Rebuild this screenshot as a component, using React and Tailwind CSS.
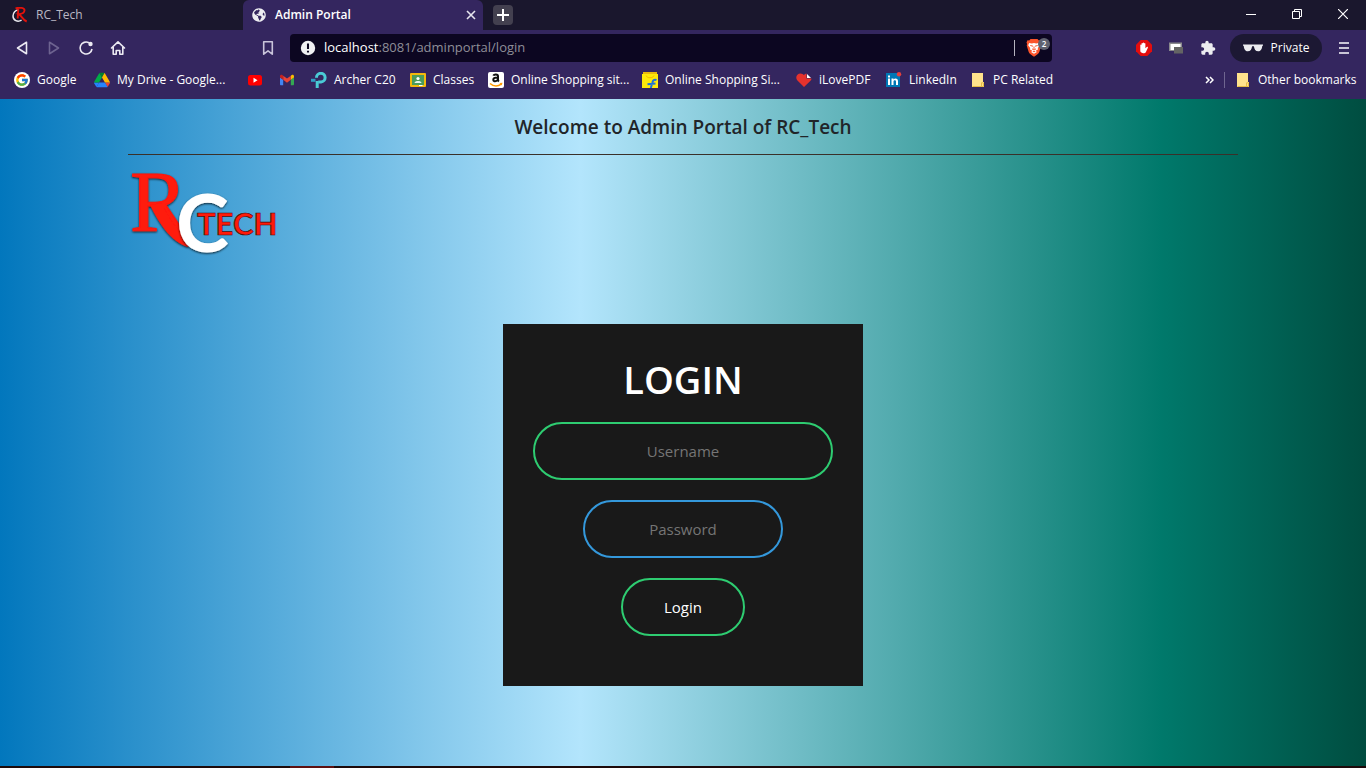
import React from "react";
import { FcGoogle } from "react-icons/fc";
import { FaGlobeAmericas } from "react-icons/fa";
import { MdExtension } from "react-icons/md";

function TabLogo() {
  return (
    <svg viewBox="0 0 16 16" className="size-4 shrink-0" aria-hidden="true">
      <path d="M6.500 3C3.500 3 1 5.500 1 9c0 4.500 4.600 6.600 8.600 4.200" fill="none" stroke="#e8e8ee" strokeWidth="1.500" />
      <path d="M3.500 1.300c4-1 9.300-.8 9 2.200-.2 2.300-3 3.500-5.800 3.700 3 1.500 4 5.800 8 7.300M6.300 1.500l-.6 10" fill="none" stroke="#e3120b" strokeWidth="1.900" />
    </svg>
  );
}

function DriveIcon() {
  return (
    <svg viewBox="0 0 87.3 78" className="size-4" aria-hidden="true">
      <path fill="#2684fc" d="m6.6 66.850 3.850 6.650c.8 1.400 1.950 2.500 3.300 3.300l13.750-23.800h-27.500c0 1.550.4 3.100 1.200 4.500z" />
      <path fill="#00ac47" d="m43.650 25-13.750-23.800c-1.350.8-2.500 1.900-3.300 3.300l-25.400 44a9.060 9.060 0 0 0 -1.200 4.500h27.500z" />
      <path fill="#ea4335" d="m73.550 76.800c1.350-.8 2.500-1.900 3.300-3.300l1.600-2.750 7.650-13.250c.8-1.400 1.200-2.950 1.200-4.500h-27.502l5.852 11.500z" />
      <path fill="#00832d" d="m43.650 25 13.750-23.800c-1.350-.8-2.900-1.200-4.500-1.200h-18.500c-1.600 0-3.150.45-4.500 1.200z" />
      <path fill="#2684fc" d="m59.800 53h-32.300l-13.750 23.800c1.350.8 2.900 1.200 4.500 1.200h50.800c1.600 0 3.150-.45 4.500-1.200z" />
      <path fill="#ffba00" d="m73.400 26.500-12.700-22c-.8-1.400-1.950-2.500-3.300-3.300l-13.750 23.800 16.150 28h27.450c0-1.550-.4-3.100-1.200-4.500z" />
    </svg>
  );
}

function GoogleIcon() {
  return (
    <span className="grid size-4 place-items-center rounded-full bg-white">
      <FcGoogle className="size-3.5" />
    </span>
  );
}

function YoutubeIcon() {
  return (
    <svg viewBox="0 0 16 16" className="size-4" aria-hidden="true">
      <rect x="1" y="3" width="14" height="10.500" rx="2.500" fill="#f00" />
      <path d="M6.500 5.800v5l4-2.500z" fill="#fff" />
    </svg>
  );
}

function GmailIcon() {
  return (
    <svg viewBox="52 42 88 66" className="size-4 p-px" aria-hidden="true">
      <path fill="#4285f4" d="M58 108h14V74L52 59v43c0 3.320 2.690 6 6 6" />
      <path fill="#34a853" d="M120 108h14c3.320 0 6-2.690 6-6V59l-20 15" />
      <path fill="#fbbc04" d="M120 48v26l20-15v-8c0-7.420-8.470-11.650-14.400-7.200" />
      <path fill="#ea4335" d="M72 74V48l24 18 24-18v26L96 92" />
      <path fill="#c5221f" d="M52 51v8l20 15V48l-5.600-4.200c-5.940-4.450-14.400-.22-14.400 7.200" />
    </svg>
  );
}

function RouterIcon() {
  return (
    <svg viewBox="0 0 16 16" className="size-4" fill="none" strokeWidth="3" aria-hidden="true">
      <path d="M0 8.300h4.500" stroke="#2f9fc4" />
      <path d="M5.500 5.800A4.300 4.300 0 1 1 10 9.900H7.200" stroke="#4acbd6" />
      <path d="M6.200 9v7" stroke="#4acbd6" />
    </svg>
  );
}

function ClassroomIcon() {
  return (
    <svg viewBox="0 0 16 16" className="size-4" aria-hidden="true">
      <rect y="1" width="16" height="14" rx="1" fill="#f2b90c" />
      <rect x="2" y="3" width="12" height="10" fill="#4a9c5b" />
      <circle cx="8" cy="6.500" r="1.600" fill="#fff" />
      <path d="M4.500 11c.3-2.600 6.700-2.600 7 0z" fill="#e3f3e9" />
      <path d="M9 13h3.500v1H9z" fill="#fff" />
    </svg>
  );
}

function AmazonIcon() {
  return (
    <svg viewBox="0 0 16 16" className="size-4" aria-hidden="true">
      <rect width="16" height="16" rx="2" fill="#fff" />
      <path d="M5.300 3.700C6 2.200 10 2 10 4.300v3.500c0 .8.300 1.200.9 1.700M9.700 5.500C7 5.500 5.300 6.100 5.300 7.800c0 2.200 3.600 2 4.500-.3" fill="none" stroke="#111" strokeWidth="2" />
      <path d="M2 11.500c3.500 3 8 3 11.300.6" fill="none" stroke="#ff9900" strokeWidth="1.500" />
      <path d="m11.500 11 3-.3-.8 2.800z" fill="#ff9900" />
    </svg>
  );
}

function FlipkartIcon() {
  return (
    <svg viewBox="0 0 16 16" className="size-4" aria-hidden="true">
      <path d="M1 0h14v3H1z" fill="#e8b90d" />
      <path d="M0 2h16v14H0z" fill="#fde90a" />
      <path d="M4 3.500c1 3 7 3 8 0" fill="none" stroke="#f5b800" />
      <path d="M14.500 8c-2.500-.8-3.500.2-4 2.200L8.800 16M5.500 12.300l8-.8" fill="none" stroke="#1c72d8" strokeWidth="2" />
    </svg>
  );
}

function HeartIcon() {
  return (
    <svg viewBox="0 0 16 16" className="size-4" aria-hidden="true">
      <path d="M8 15 1.200 8.300C-1 5 1 1.500 4.500 1.500 6 1.500 7.300 2.300 8 3.300 8.500 2.300 9.500 1.500 10.500 1.500V6.500h5c0 1-.5 1.700-1 2.200z" fill="#e5322d" />
      <path d="M11 2 15 6h-4z" fill="#fff" />
    </svg>
  );
}

function LinkedinIcon() {
  return (
    <svg viewBox="0 0 16 16" className="size-4" aria-hidden="true">
      <rect y="1" width="14" height="14" fill="#0077b5" />
      <path d="M2 6.500h2V13H2zM2 3.500h2v2H2zM5.500 6.500h2v1c1-1.700 4.500-1.500 4.500 1.500v4h-2V9.500c0-1.800-2.500-1.600-2.500 0V13h-2z" fill="#fff" />
      <circle cx="13" cy="2.300" r="2.200" fill="#e6403c" />
    </svg>
  );
}

function FolderIcon() {
  return (
    <svg viewBox="0 0 16 16" className="size-4" aria-hidden="true">
      <path d="M2 1h11v9h1v5H2z" fill="#ffe38c" />
      <path d="M11.500 14.500v-3.700h2v3.700H2.500" fill="none" stroke="#e6bc45" />
    </svg>
  );
}

const bookmarks = [
  { label: "Google", icon: GoogleIcon, size: "w-16" },
  { label: "My Drive - Google...", icon: DriveIcon, size: "w-[137px]" },
  { name: "YouTube", icon: YoutubeIcon, size: "w-4" },
  { name: "Gmail", icon: GmailIcon, size: "w-4" },
  { label: "Archer C20", icon: RouterIcon, size: "w-[83px]" },
  { label: "Classes", icon: ClassroomIcon, size: "w-[62px]" },
  { label: "Online Shopping sit...", icon: AmazonIcon, size: "w-[138px]" },
  { label: "Online Shopping Si...", icon: FlipkartIcon, size: "w-[138px]" },
  { label: "iLovePDF", icon: HeartIcon, size: "w-[74px]" },
  { label: "LinkedIn", icon: LinkedinIcon, size: "w-[68px]" },
  { label: "PC Related", icon: FolderIcon, size: "w-[84px]" },
];

function Bookmark({ label, name, icon: Icon, size }) {
  return (
    <a href="#" aria-label={name} className={"flex shrink-0 items-center gap-[7px] whitespace-nowrap " + size}>
      <span className="shrink-0"><Icon /></span>
      {label}
    </a>
  );
}

function TabStrip() {
  return (
    <div className="flex h-[30px] bg-[#1a172d]">
      <div className="flex w-[243px] items-center gap-2 pl-3 text-[#b9b7c4]">
        <TabLogo />
        <span>RC_Tech</span>
      </div>
      <div className="flex w-60 items-center gap-2 rounded-t-md bg-[#34265f] pr-[7px] pl-2 font-semibold text-white">
        <FaGlobeAmericas className="size-4 p-px text-[#ededf2]" />
        <span className="flex-1">Admin Portal</span>
        <button aria-label="Close tab">
          <svg viewBox="0 0 10 10" className="size-2.5" fill="none" stroke="#e6e4ee" strokeWidth="1.600"><path d="m1 1 8 8M9 1 1 9" /></svg>
        </button>
      </div>
      <button aria-label="New tab" className="mt-[5px] ml-2.5 grid size-5 place-items-center rounded-sm bg-[#43404f]">
        <svg viewBox="0 0 12 12" className="size-3" stroke="#fff" strokeWidth="2"><path d="M6 0v12M0 6h12" /></svg>
      </button>
      <div className="ml-auto flex items-center gap-9 pr-[18px] pb-0.5">
        <button aria-label="Minimize">
          <svg viewBox="0 0 10 10" className="size-2.5" stroke="#fff"><path d="M0 5.500h10" /></svg>
        </button>
        <button aria-label="Restore">
          <svg viewBox="0 0 10 10" className="size-2.5" fill="none" stroke="#fff"><path d="M.5 2.500h7v7h-7zM2.500 2.500v-2h7v7h-2" /></svg>
        </button>
        <button aria-label="Close window">
          <svg viewBox="0 0 10 10" className="size-2.5" stroke="#fff" strokeWidth="1.200"><path d="m0 0 10 10M10 0 0 10" /></svg>
        </button>
      </div>
    </div>
  );
}

function Toolbar() {
  return (
    <div className="flex h-9 items-center">
      <div className="flex items-center gap-4 pl-3.5">
        <button aria-label="Back">
          <svg viewBox="0 0 16 16" className="size-4" fill="none" stroke="#ebe9f2" strokeWidth="1.600" strokeLinejoin="round"><path d="M12.500 2.300v11.400L3.500 8z" /></svg>
        </button>
        <button aria-label="Forward">
          <svg viewBox="0 0 16 16" className="size-4" fill="none" stroke="#6d6390" strokeWidth="1.600" strokeLinejoin="round"><path d="M3.500 2.300v11.400l9-5.700z" /></svg>
        </button>
        <button aria-label="Reload">
          <svg viewBox="0 0 16 16" className="size-4" fill="none" stroke="#ebe9f2" strokeWidth="1.600"><path d="M11 2.800A6 6 0 1 0 14 9" /><circle cx="12.500" cy="4" r="2.200" fill="#ebe9f2" stroke="none" /></svg>
        </button>
        <button aria-label="Home">
          <svg viewBox="0 0 16 16" className="size-4" fill="none" stroke="#ebe9f2" strokeWidth="1.600" strokeLinejoin="round" strokeLinecap="round"><path d="m1.500 8 6.500-6.200L14.500 8M3.200 7v7.200h3V10.500h3.600v3.700h3V7" /></svg>
        </button>
      </div>
      <button aria-label="Bookmark this page" className="ml-[134px]">
        <svg viewBox="0 0 16 16" className="size-4" fill="none" stroke="#c9c4da" strokeWidth="1.600" strokeLinejoin="round"><path d="M3.700 1.700h8.600v12.500L8 10.800l-4.300 3.400z" /></svg>
      </button>
      <div className="ml-3.5 flex h-7 max-w-[762px] min-w-0 flex-1 items-center rounded-sm bg-[#0c0621] pr-0.5 pl-2.5">
        <svg viewBox="0 0 14 14" className="size-4 shrink-0" aria-hidden="true"><circle cx="7" cy="7" r="6.300" fill="#f0f0f3" /><path d="M7 3v4.800M7 9.300v1.700" stroke="#0c0621" strokeWidth="1.800" /></svg>
        <a href="#" className="ml-2 flex-1 text-[13px] text-[#8f8e98]"><span className="text-white">localhost</span>:8081/adminportal/login</a>
        <span className="mr-[11px] h-4 w-px bg-[#b5b3bf]" />
        <button aria-label="Shields" className="relative h-5 w-6">
          <svg viewBox="0 0 16 20" className="h-5 w-4">
            <path d="M4.500 1h7l1.300 1.400 1.700-.1 1 2.200-.6 1.500.4 1.500-2 6.500c-.3 1-1 1.700-1.800 2.300L8.500 18.600h-1l-3-2.300c-.8-.6-1.500-1.300-1.800-2.300l-2-6.500.4-1.500L.5 4.500l1-2.200 1.700.1z" fill="#fb542b" />
            <path d="m3.200 5 2.600.4L8 5l2.200.4 2.600-.4 1 2.200-2 2.800.2 1.500-2 1 .6 1.700L8 15.800l-2.600-1.600.6-1.700-2-1L4.200 10l-2-2.800z" fill="#fff" />
            <path d="M4.300 7.500 7 8.200M11.700 7.500 9 8.200M8 8.500V11M6 10.800l2 1.200 2-1.200M6.800 13.600h2.400" stroke="#fb542b" fill="none" />
          </svg>
          <span className="absolute top-0 right-0 grid size-3 place-items-center rounded-full bg-[#5f6270] text-[8px] leading-3 font-semibold text-white">2</span>
        </button>
      </div>
      <div className="ml-auto flex items-center gap-4 pl-4">
        <button aria-label="Ad blocker">
          <svg viewBox="0 0 16 16" className="size-4"><path d="M4.700 0h6.600L16 4.700v6.600L11.300 16H4.700L0 11.300V4.700z" fill="#e40d0d" /><path d="M4.300 8.500V5.200c0-.8 1.200-.8 1.200 0V3.700c0-.8 1.300-.8 1.300 0V3c0-.8 1.300-.8 1.300 0v.7c0-.8 1.300-.8 1.300 0v4.500l1.400-1.300c.8-.4 1.400.3 1 1L9.800 12.200c-.9 1.500-5.300 1.300-5.500-1.200z" fill="#fff" /></svg>
        </button>
        <button aria-label="Windows extension">
          <svg viewBox="0 0 16 16" className="size-4"><path d="M1 2.500h13V11H1z" fill="#8a8a8d" /><path d="M2.500 4h10v6h-10z" fill="#fff" /><path d="M6 7h9v6.500H6z" fill="#646464" /></svg>
        </button>
        <button aria-label="Extensions"><MdExtension className="size-4 text-[#ececf0]" /></button>
        <button className="-ml-0.5 flex h-7 w-[92px] items-center justify-center gap-2 rounded-full bg-[#1c1833] text-white">
          <svg viewBox="0 0 20 8" className="h-2 w-5" aria-hidden="true"><path d="M0 .5h20v1.300h-.7C18.800 6 17.500 7.300 15.300 7.300c-2.800 0-4-2-4.400-5H9.100c-.4 3-1.600 5-4.400 5C2.500 7.300 1.200 6 .7 1.800H0z" fill="#ececf0" /></svg>
          Private
        </button>
        <button aria-label="Menu" className="mr-4">
          <svg viewBox="0 0 12 12" className="size-3" stroke="#c9c5d6" strokeWidth="2"><path d="M1 1h10M1 6h10M1 11h10" /></svg>
        </button>
      </div>
    </div>
  );
}

function BookmarksBar() {
  return (
    <nav aria-label="Bookmarks" className="flex h-[33px] items-center gap-4 px-3.5 pb-[5px] text-white">
      {bookmarks.map((b) => <Bookmark key={b.name || b.label} {...b} />)}
      <div className="ml-auto flex items-center">
        <button aria-label="More bookmarks" className="mr-2.5">
          <svg viewBox="0 0 9 8" className="h-2 w-[9px]" fill="none" stroke="#fff" strokeWidth="1.500"><path d="m1 1 3 3-3 3M5 1l3 3-3 3" /></svg>
        </button>
        <span className="mr-2.5 h-4 w-px bg-[#6f6690]" />
        <a href="#" className="flex w-[117px] items-center gap-[7px] whitespace-nowrap">
          <span className="shrink-0"><FolderIcon /></span>
          Other bookmarks
        </a>
      </div>
    </nav>
  );
}

function Logo() {
  return (
    <svg viewBox="0 0 150 90" className="h-[90px] w-[150px] overflow-visible" role="img" aria-label="RC Tech">
      <defs>
        <filter id="logo-shadow" x="-10%" y="-10%" width="120%" height="130%">
          <feDropShadow dx="0" dy="1" stdDeviation="1.200" floodColor="#000" floodOpacity="0.8" />
        </filter>
      </defs>
      <g filter="url(#logo-shadow)" strokeLinejoin="round" fill="#ff1a0a">
        <text x="2" y="62" fontFamily="Liberation Serif, serif" fontSize="86" stroke="#ff1a0a">R</text>
        <path d="M22 36C31 54 42 72 60 78L63 70C50 63 42 52 34 34z" />
      </g>
      <g filter="url(#logo-shadow)">
        <text x="48" y="83" fontFamily="Lato, sans-serif" fontWeight="700" fontSize="80" fill="#fff">C</text>
      </g>
      <text x="69" y="66" fontFamily="Lato, sans-serif" fontWeight="700" fontSize="31" fill="#ff1a0a" stroke="#4a0a08" strokeWidth=".7">TECH</text>
    </svg>
  );
}

export default function App() {
  return (
    <div className="flex min-h-screen flex-col bg-[#34265f] font-['Open_Sans','Noto_Sans',sans-serif]">
      <header className="text-xs">
        <TabStrip />
        <Toolbar />
        <BookmarksBar />
      </header>
      <main className="flex flex-1 flex-col bg-[linear-gradient(90deg,#0277bd_0%,#b3e5fc_42.5%,#00796b_85%,#004d40_100%)] px-32">
        <h1 className="border-b border-[#3a3029] pt-[15px] pb-[13px] text-center text-[19px] leading-[27px] font-semibold text-[#212529]">Welcome to Admin Portal of RC_Tech</h1>
        <div className="mt-3.5"><Logo /></div>
        <form onSubmit={(e) => e.preventDefault()} className="mx-auto mt-[65px] mb-20 flex w-[360px] flex-col items-center gap-5 bg-[#191919] px-[30px] pt-8 pb-[50px] text-[15px] text-white">
          <h2 className="text-[38px] leading-[46px] font-semibold">LOGIN</h2>
          <input aria-label="Username" placeholder="Username" className="h-[58px] w-full rounded-full border-2 border-[#2ecc71] bg-transparent text-center outline-none placeholder:text-[#757575]" />
          <input aria-label="Password" type="password" placeholder="Password" className="h-[58px] w-[200px] rounded-full border-2 border-[#3498db] bg-transparent text-center outline-none placeholder:text-[#757575]" />
          <button type="submit" className="h-[58px] w-[124px] rounded-full border-2 border-[#2ecc71]">Login</button>
        </form>
      </main>
      <footer className="flex h-0.5 bg-[#1d0a0a]">
        <span className="ml-[290px] w-11 bg-[#5e1010]" />
      </footer>
    </div>
  );
}
